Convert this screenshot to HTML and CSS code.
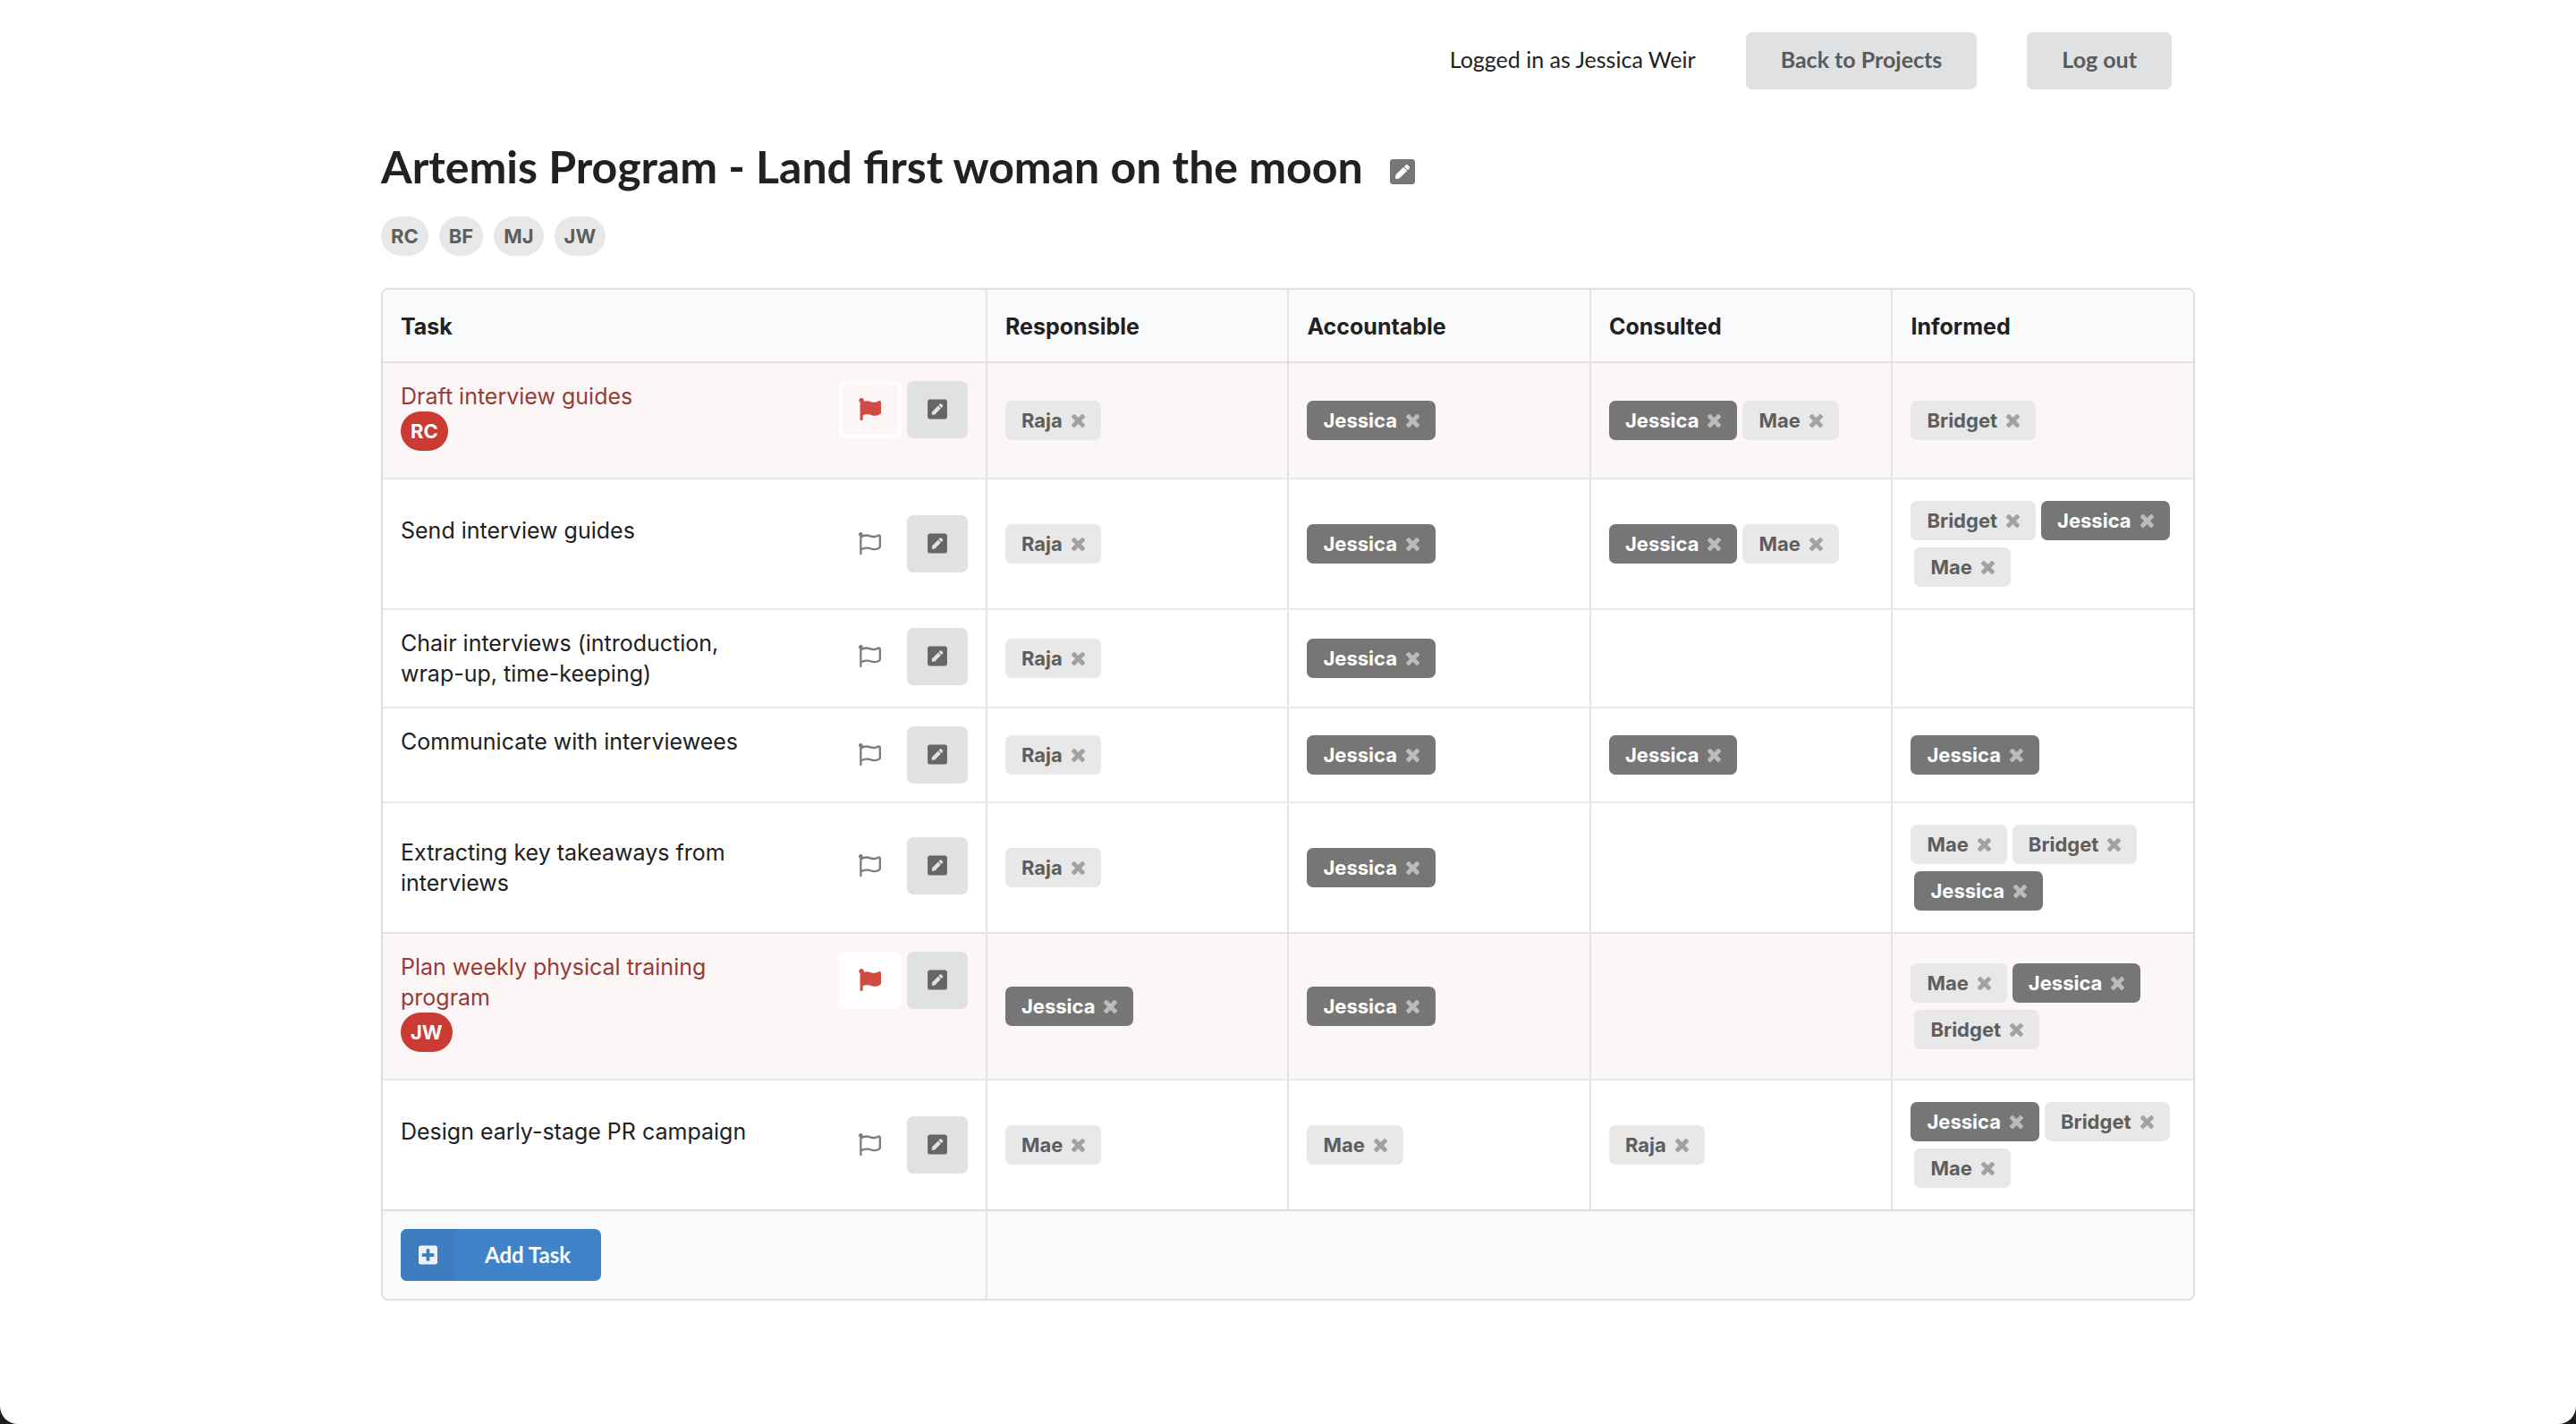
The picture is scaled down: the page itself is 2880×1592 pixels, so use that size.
FILE: index.html
```html
<!DOCTYPE html>
<html lang="en">
<head>
<meta charset="utf-8">
<meta name="viewport" content="width=device-width, initial-scale=1">
<title>Artemis Program</title>
<link rel="stylesheet" href="styles.css">
</head>
<body>
<svg class="sprite" aria-hidden="true">
  <symbol id="pen" viewBox="0 0 448 512"><path d="M400 480H48c-26.500 0-48-21.500-48-48V80c0-26.500 21.500-48 48-48h352c26.500 0 48 21.500 48 48v352c0 26.500-21.500 48-48 48zM238.100 177.900L102.400 313.600l-6.300 57.100c-.8 7.600 5.600 14.100 13.300 13.300l57.100-6.300L302.200 242c2.300-2.300 2.300-6.100 0-8.500L246.700 178c-2.500-2.400-6.300-2.400-8.600-.1zM345 165.100L314.900 135c-9.400-9.400-24.600-9.400-33.900 0l-23.100 23.100c-2.300 2.300-2.300 6.100 0 8.500l55.500 55.500c2.300 2.300 6.100 2.300 8.500 0L345 199c9.300-9.300 9.300-24.500 0-33.900z"/></symbol>
  <symbol id="flag" viewBox="0 0 512 512"><path d="M349.565 98.783C295.978 98.783 251.721 64 184.348 64c-24.955 0-47.309 4.384-68.045 12.013a55.947 55.947 0 0 0 3.586-23.562C118.117 24.015 94.806 1.206 66.338.048 34.345-1.254 8 24.296 8 56c0 19.026 9.497 35.825 24 45.945V488c0 13.255 10.745 24 24 24h16c13.255 0 24-10.745 24-24v-94.400c28.311-12.064 63.582-22.122 114.435-22.122 53.588 0 97.844 34.783 165.217 34.783 48.169 0 86.667-16.294 122.505-40.858C506.840 359.452 512 349.571 512 339.045v-243.100c0-23.393-24.269-38.870-45.485-29.016-34.338 15.948-76.454 31.854-116.950 31.854z"/></symbol>
  <symbol id="flag-outline" viewBox="0 0 512 512"><path d="M336.174 80c-49.132 0-93.305-32-161.913-32-31.301 0-58.303 6.482-80.721 15.168a48.040 48.040 0 0 0 2.142-20.727C93.067 19.575 74.167 1.594 51.201.104 23.242-1.710 0 20.431 0 48c0 17.764 9.657 33.262 24 41.562V496c0 8.837 7.163 16 16 16h16c8.837 0 16-7.163 16-16v-83.443C109.869 395.280 143.259 384 199.826 384c49.132 0 93.305 32 161.913 32 58.479 0 101.972-22.617 128.548-39.981C503.846 367.161 512 352.051 512 335.855V95.937c0-34.459-35.264-57.768-66.904-44.117C409.193 67.309 371.641 80 336.174 80zM464 336c-21.783 15.412-60.824 32-102.261 32-59.945 0-102.002-32-161.913-32-43.361 0-96.379 9.403-127.826 24V128c21.784-15.412 60.824-32 102.261-32 59.945 0 102.002 32 161.913 32 43.271 0 96.320-17.366 127.826-32v240z"/></symbol>
  <symbol id="plus" viewBox="0 0 448 512"><path d="M400 32H48C21.500 32 0 53.500 0 80v352c0 26.500 21.500 48 48 48h352c26.500 0 48-21.500 48-48V80c0-26.500-21.500-48-48-48zm-32 252c0 6.600-5.400 12-12 12h-92v92c0 6.600-5.400 12-12 12h-56c-6.600 0-12-5.400-12-12v-92H92c-6.600 0-12-5.400-12-12v-56c0-6.600 5.400-12 12-12h92v-92c0-6.600 5.400-12 12-12h56c6.600 0 12 5.400 12 12v92h92c6.600 0 12 5.400 12 12v56z"/></symbol>
  <symbol id="times" viewBox="110 366 1188 1188"><path d="M1298 1322q0 40-28 68l-136 136q-28 28-68 28t-68-28l-294-294-294 294q-28 28-68 28t-68-28l-136-136q-28-28-28-68t28-68l294-294-294-294q-28-28-28-68t28-68l136-136q28-28 68-28t68 28l294 294 294-294q28-28 68-28t68 28l136 136q28 28 28 68t-28 68l-294 294 294 294q28 28 28 68z"/></symbol>
</svg>

<header class="topbar container">
  <span class="user">Logged in as Jessica Weir</span>
  <button class="button" type="button">Back to Projects</button>
  <button class="button" type="button">Log out</button>
</header>

<main class="container">
  <div class="title">
    <h1>Artemis Program - Land first woman on the moon</h1>
    <button class="title-edit" type="button" aria-label="Edit project"><svg><use href="#pen"/></svg></button>
  </div>
  <div class="members">
    <span class="avatar">RC</span><span class="avatar">BF</span><span class="avatar">MJ</span><span class="avatar">JW</span>
  </div>

  <table class="matrix">
    <colgroup><col class="col-task"><col><col><col><col></colgroup>
    <thead>
      <tr><th>Task</th><th>Responsible</th><th>Accountable</th><th>Consulted</th><th>Informed</th></tr>
    </thead>
    <tbody>
      <tr class="flagged">
        <td>
          <div class="task">
            <div class="task-name">Draft interview guides<span class="avatar">RC</span></div>
            <div class="task-actions">
              <button class="icon-button flag-button" type="button" aria-label="Unflag task"><svg><use href="#flag"/></svg></button>
              <button class="icon-button" type="button" aria-label="Edit task"><svg><use href="#pen"/></svg></button>
            </div>
          </div>
        </td>
        <td><ul class="people"><li class="chip">Raja<button type="button" aria-label="Remove Raja"><svg><use href="#times"/></svg></button></li></ul></td>
        <td><ul class="people"><li class="chip own">Jessica<button type="button" aria-label="Remove Jessica"><svg><use href="#times"/></svg></button></li></ul></td>
        <td><ul class="people"><li class="chip own">Jessica<button type="button" aria-label="Remove Jessica"><svg><use href="#times"/></svg></button></li><li class="chip">Mae<button type="button" aria-label="Remove Mae"><svg><use href="#times"/></svg></button></li></ul></td>
        <td><ul class="people"><li class="chip">Bridget<button type="button" aria-label="Remove Bridget"><svg><use href="#times"/></svg></button></li></ul></td>
      </tr>
      <tr>
        <td>
          <div class="task">
            <div class="task-name">Send interview guides</div>
            <div class="task-actions">
              <button class="icon-button flag-button" type="button" aria-label="Flag task"><svg><use href="#flag-outline"/></svg></button>
              <button class="icon-button" type="button" aria-label="Edit task"><svg><use href="#pen"/></svg></button>
            </div>
          </div>
        </td>
        <td><ul class="people"><li class="chip">Raja<button type="button" aria-label="Remove Raja"><svg><use href="#times"/></svg></button></li></ul></td>
        <td><ul class="people"><li class="chip own">Jessica<button type="button" aria-label="Remove Jessica"><svg><use href="#times"/></svg></button></li></ul></td>
        <td><ul class="people"><li class="chip own">Jessica<button type="button" aria-label="Remove Jessica"><svg><use href="#times"/></svg></button></li><li class="chip">Mae<button type="button" aria-label="Remove Mae"><svg><use href="#times"/></svg></button></li></ul></td>
        <td><ul class="people"><li class="chip">Bridget<button type="button" aria-label="Remove Bridget"><svg><use href="#times"/></svg></button></li><li class="chip own">Jessica<button type="button" aria-label="Remove Jessica"><svg><use href="#times"/></svg></button></li><li class="chip">Mae<button type="button" aria-label="Remove Mae"><svg><use href="#times"/></svg></button></li></ul></td>
      </tr>
      <tr>
        <td>
          <div class="task">
            <div class="task-name">Chair interviews (introduction, wrap-up, time-keeping)</div>
            <div class="task-actions">
              <button class="icon-button flag-button" type="button" aria-label="Flag task"><svg><use href="#flag-outline"/></svg></button>
              <button class="icon-button" type="button" aria-label="Edit task"><svg><use href="#pen"/></svg></button>
            </div>
          </div>
        </td>
        <td><ul class="people"><li class="chip">Raja<button type="button" aria-label="Remove Raja"><svg><use href="#times"/></svg></button></li></ul></td>
        <td><ul class="people"><li class="chip own">Jessica<button type="button" aria-label="Remove Jessica"><svg><use href="#times"/></svg></button></li></ul></td>
        <td></td>
        <td></td>
      </tr>
      <tr>
        <td>
          <div class="task">
            <div class="task-name">Communicate with interviewees</div>
            <div class="task-actions">
              <button class="icon-button flag-button" type="button" aria-label="Flag task"><svg><use href="#flag-outline"/></svg></button>
              <button class="icon-button" type="button" aria-label="Edit task"><svg><use href="#pen"/></svg></button>
            </div>
          </div>
        </td>
        <td><ul class="people"><li class="chip">Raja<button type="button" aria-label="Remove Raja"><svg><use href="#times"/></svg></button></li></ul></td>
        <td><ul class="people"><li class="chip own">Jessica<button type="button" aria-label="Remove Jessica"><svg><use href="#times"/></svg></button></li></ul></td>
        <td><ul class="people"><li class="chip own">Jessica<button type="button" aria-label="Remove Jessica"><svg><use href="#times"/></svg></button></li></ul></td>
        <td><ul class="people"><li class="chip own">Jessica<button type="button" aria-label="Remove Jessica"><svg><use href="#times"/></svg></button></li></ul></td>
      </tr>
      <tr>
        <td>
          <div class="task">
            <div class="task-name">Extracting key takeaways from interviews</div>
            <div class="task-actions">
              <button class="icon-button flag-button" type="button" aria-label="Flag task"><svg><use href="#flag-outline"/></svg></button>
              <button class="icon-button" type="button" aria-label="Edit task"><svg><use href="#pen"/></svg></button>
            </div>
          </div>
        </td>
        <td><ul class="people"><li class="chip">Raja<button type="button" aria-label="Remove Raja"><svg><use href="#times"/></svg></button></li></ul></td>
        <td><ul class="people"><li class="chip own">Jessica<button type="button" aria-label="Remove Jessica"><svg><use href="#times"/></svg></button></li></ul></td>
        <td></td>
        <td><ul class="people"><li class="chip">Mae<button type="button" aria-label="Remove Mae"><svg><use href="#times"/></svg></button></li><li class="chip">Bridget<button type="button" aria-label="Remove Bridget"><svg><use href="#times"/></svg></button></li><li class="chip own">Jessica<button type="button" aria-label="Remove Jessica"><svg><use href="#times"/></svg></button></li></ul></td>
      </tr>
      <tr class="flagged">
        <td>
          <div class="task">
            <div class="task-name">Plan weekly physical training program<span class="avatar">JW</span></div>
            <div class="task-actions">
              <button class="icon-button flag-button active" type="button" aria-label="Unflag task"><svg><use href="#flag"/></svg></button>
              <button class="icon-button" type="button" aria-label="Edit task"><svg><use href="#pen"/></svg></button>
            </div>
          </div>
        </td>
        <td><ul class="people"><li class="chip own">Jessica<button type="button" aria-label="Remove Jessica"><svg><use href="#times"/></svg></button></li></ul></td>
        <td><ul class="people"><li class="chip own">Jessica<button type="button" aria-label="Remove Jessica"><svg><use href="#times"/></svg></button></li></ul></td>
        <td></td>
        <td><ul class="people"><li class="chip">Mae<button type="button" aria-label="Remove Mae"><svg><use href="#times"/></svg></button></li><li class="chip own">Jessica<button type="button" aria-label="Remove Jessica"><svg><use href="#times"/></svg></button></li><li class="chip">Bridget<button type="button" aria-label="Remove Bridget"><svg><use href="#times"/></svg></button></li></ul></td>
      </tr>
      <tr>
        <td>
          <div class="task">
            <div class="task-name">Design early-stage PR campaign</div>
            <div class="task-actions">
              <button class="icon-button flag-button" type="button" aria-label="Flag task"><svg><use href="#flag-outline"/></svg></button>
              <button class="icon-button" type="button" aria-label="Edit task"><svg><use href="#pen"/></svg></button>
            </div>
          </div>
        </td>
        <td><ul class="people"><li class="chip">Mae<button type="button" aria-label="Remove Mae"><svg><use href="#times"/></svg></button></li></ul></td>
        <td><ul class="people"><li class="chip">Mae<button type="button" aria-label="Remove Mae"><svg><use href="#times"/></svg></button></li></ul></td>
        <td><ul class="people"><li class="chip">Raja<button type="button" aria-label="Remove Raja"><svg><use href="#times"/></svg></button></li></ul></td>
        <td><ul class="people"><li class="chip own">Jessica<button type="button" aria-label="Remove Jessica"><svg><use href="#times"/></svg></button></li><li class="chip">Bridget<button type="button" aria-label="Remove Bridget"><svg><use href="#times"/></svg></button></li><li class="chip">Mae<button type="button" aria-label="Remove Mae"><svg><use href="#times"/></svg></button></li></ul></td>
      </tr>
    </tbody>
    <tfoot>
      <tr>
        <td><button class="add" type="button"><span class="add-icon"><svg><use href="#plus"/></svg></span><span class="add-label">Add Task</span></button></td>
        <td colspan="4"></td>
      </tr>
    </tfoot>
  </table>
</main>
</body>
</html>
```
FILE: styles.css
```css
* { box-sizing: border-box; }

html { background: #1c1c1c; }

body {
  display: flow-root;
  min-height: 100vh;
  margin: 0;
  border-radius: 0 0 20px 20px;
  background: #fff;
  color: #212121;
  font: 25px/34px Inter, "Noto Sans", sans-serif;
}

button { font: inherit; border: 0; cursor: pointer; }
svg { display: block; fill: currentColor; }
.sprite { display: none; }

.container { max-width: 2028px; margin: 0 auto; }

.topbar {
  display: flex;
  align-items: center;
  justify-content: flex-end;
  gap: 56px;
  padding: 36px 26px 0 0;
  font-family: Lato, sans-serif;
}

.user { padding-bottom: 4px; }

.button {
  height: 64px;
  padding: 0 39px 4px;
  border-radius: 7px;
  background: #e0e1e2;
  color: #5a5a5a;
  font-weight: 700;
}

.title { display: flex; align-items: center; gap: 30px; margin-top: 54px; }
.title h1 { margin: 0; font: 700 50px/64px Lato, sans-serif; }
.title-edit { padding: 12px 0 0; background: none; color: #767676; }
.title-edit svg { width: 28px; height: 32px; }

.members { display: flex; gap: 12px; margin-top: 24px; }

.avatar {
  display: inline-block;
  padding: 0 11px;
  border-radius: 22px;
  background: #e8e8e8;
  color: #5e5e5e;
  font-size: 22px;
  font-weight: 700;
  line-height: 44px;
}

.matrix {
  width: 100%;
  margin: 36px 0 80px;
  table-layout: fixed;
  border: 2px solid #dededf;
  border-radius: 8px;
  border-collapse: separate;
  border-spacing: 0;
  overflow: hidden;
}

.col-task { width: 33.3%; }

.matrix th,
.matrix td {
  padding: 20px;
  border-left: 2px solid #e5e5e6;
  text-align: left;
}
.matrix th:first-child,
.matrix td:first-child { border-left: 0; }
.matrix th { padding: 24px 20px 22px; background: #f9fafb; font-weight: 700; }
.matrix tbody td { border-top: 2px solid #e8e8e8; }
.matrix tbody td + td { padding: 24px 20px; }
.matrix tfoot td { border-top: 2px solid #dededf; background: #f9fafb; }

.task { display: flex; align-items: flex-start; justify-content: space-between; }
.task-name { width: 400px; }
.task-actions { display: flex; gap: 6px; }

.matrix .flagged td { border-color: #e6e1e1; background: #fcf6f6; color: #963c37; }
.flagged .task-name { padding-bottom: 10px; }
.flagged .avatar { display: table; background: #cb3b33; color: #fff; }

.icon-button {
  display: flex;
  align-items: center;
  justify-content: center;
  width: 68px;
  height: 64px;
  padding: 0 0 2px;
  border-radius: 7px;
  background: #e0e1e2;
  color: #666;
}
.icon-button svg { width: 22px; height: 25px; }
.icon-button.flag-button { width: 70px; background: none; color: #7d7d7d; }
.icon-button.flag-button svg { width: 25px; height: 25px; }
.flagged .icon-button.flag-button { border: 4px solid #fff; color: #d04b44; }
.flagged .icon-button.active { background: #fff; }

.people { display: flex; flex-wrap: wrap; gap: 8px 2px; margin: 0; padding: 0; list-style: none; }

.chip {
  display: flex;
  align-items: center;
  gap: 10px;
  height: 44px;
  margin-left: 4px;
  padding: 0 18px;
  border-radius: 7px;
  background: #e8e8e8;
  color: #5e5e5e;
  font-size: 22px;
  font-weight: 700;
}
.chip:first-child { margin-left: 0; }
.chip.own { background: #767676; color: #fff; }
.chip button { padding: 0; background: none; color: inherit; opacity: .5; }
.chip svg { width: 15px; height: 15px; }

.add {
  display: flex;
  height: 58px;
  padding: 0;
  overflow: hidden;
  border-radius: 7px;
  background: #4183c9;
  color: #fff;
  font: 700 24px/58px Lato, sans-serif;
}
.add-icon { display: flex; align-items: center; justify-content: center; width: 60px; background: #3e7dc0; }
.add-icon svg { width: 21px; height: 24px; fill: #ebf2f9; }
.add-label { padding: 0 34px; }
```
